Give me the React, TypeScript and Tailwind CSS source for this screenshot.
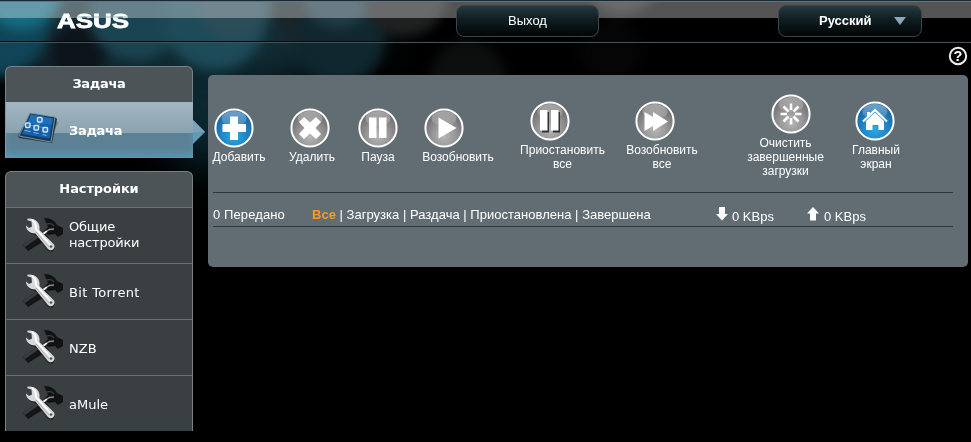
import React from 'react';

type IconKind = 'add' | 'remove' | 'pause' | 'play' | 'pauseAll' | 'playAll' | 'clear' | 'home';

interface Tool {
  icon: IconKind;
  lines: string[];
  column: string;
  offset: string;
}

const tools: Tool[] = [
  { icon: 'add', lines: ['Добавить'], column: 'w-[62px]', offset: 'ml-1.5' },
  { icon: 'remove', lines: ['Удалить'], column: 'w-[84px]', offset: 'ml-5' },
  { icon: 'pause', lines: ['Пауза'], column: 'w-12', offset: 'ml-1' },
  { icon: 'play', lines: ['Возобновить'], column: 'w-28', offset: 'ml-[22px]' },
  { icon: 'pauseAll', lines: ['Приостановить', 'все'], column: 'w-[97px]', offset: 'ml-4' },
  { icon: 'playAll', lines: ['Возобновить', 'все'], column: 'w-[102px]', offset: 'ml-6' },
  { icon: 'clear', lines: ['Очистить', 'завершенные', 'загрузки'], column: 'w-[127px] ml-[9px]', offset: 'ml-[49px]' },
  { icon: 'home', lines: ['Главный', 'экран'], column: 'w-[54px]', offset: 'ml-1.5' },
];

const settings = [
  { lines: ['Общие', 'настройки'], text: '-mt-0.5 tracking-[-0.2px]' },
  { lines: ['Bit Torrent'], text: 'mt-0.5 tracking-[0.35px]' },
  { lines: ['NZB'], text: 'mt-0.5' },
  { lines: ['aMule'], text: 'mt-0.5' },
];

const filters = ['Загрузка', 'Раздача', 'Приостановлена', 'Завершена'];

const Glyph: React.FC<{ icon: IconKind }> = ({ icon }) => {
  switch (icon) {
    case 'add':
      return <path d="M16 8.500h8v7.500h8v8h-8V32h-8v-8H8.500v-8H16z" />;
    case 'remove':
      return <path d="M14 9l6 5.500L26 9l5 5-5.500 6 5.500 6-5 5-6-5.500L14 31l-5-5 5.500-6L9 14z" />;
    case 'pause':
      return <path d="M11 9.500h7.500V30H11zM21 9.500h7.500V30H21z" />;
    case 'play':
      return <path d="M14.500 9.500v21L32.500 20z" />;
    case 'pauseAll':
      return (
        <>
          <path d="M12 11h7v20.500h-7zM23 11h7v20.500h-7z" fill="#333" />
          <path d="M10 9h7.500v20.500H10zM21 9h7.500v20.500H21z" />
        </>
      );
    case 'playAll':
      return <path d="M9.500 11v19l8.500-5v5l15-9.500L18 11v5z" />;
    case 'clear':
      return (
        <path
          d="M20 9.500v6.500M20 24v6.500M9.500 20H16M24 20h6.500M12.500 12.500l5 5M22.500 22.500l5 5M27.500 12.500l-5 5M17.500 22.500l-5 5"
          stroke="#fff"
          strokeWidth="2.500"
        />
      );
    default:
      return (
        <>
          <path d="M12 11h3v5h-3z" />
          <path d="m8 20.500 12-11.500 12 11.500" fill="none" stroke="#fff" strokeWidth="2" />
          <path d="m11 20 9-8.500 9 8.500v9h-5.500v-5h-6v5H11z" />
        </>
      );
  }
};

const RoundIcon: React.FC<{ icon: IconKind; className: string }> = ({ icon, className }) => {
  const blue = icon === 'add' || icon === 'home';
  return (
    <svg width="40" height="40" viewBox="0 0 40 40" className={className}>
      <defs>
        <radialGradient id={`disc-${icon}`} cx="50%" cy="72%" r="65%">
          <stop offset="0" stopColor={blue ? '#2cabe2' : '#b8b8b8'} />
          <stop offset=".45" stopColor={blue ? '#2389c8' : '#999'} />
          <stop offset="1" stopColor={blue ? '#1763a4' : '#6c6c6c'} />
        </radialGradient>
        <linearGradient id={`gloss-${icon}`} x2="0" y2="1">
          <stop offset="0" stopColor="#fff" stopOpacity=".4" />
          <stop offset="1" stopColor="#fff" stopOpacity=".12" />
        </linearGradient>
      </defs>
      <circle cx="20" cy="20" r="18.600" fill={`url(#disc-${icon})`} stroke="#fff" strokeWidth="2" />
      <ellipse cx="20" cy="10.500" rx="12.500" ry="7.500" fill={`url(#gloss-${icon})`} />
      <g fill="#fff">
        <Glyph icon={icon} />
      </g>
    </svg>
  );
};

const ToolsIcon = () => (
  <svg width="42" height="36" viewBox="0 0 42 36" className="shrink-0 -mt-px">
    {/* hammer */}
    <path d="M0 28 20 14l6 7L5 34z" fill="#131516" />
    <path d="m0 28 20-14 2 2L2 30z" fill="#3a3d3e" />
    <path d="M21 1c7 0 11 3 13 7l6 3v6l-5 3-3-3-7 1-4-4 4-4z" fill="#101213" />
    <path d="M22 8c3-2 7-2 9 1" fill="none" stroke="#3b3f41" strokeWidth="1.500" />
    <path d="M24 14c2-2 4-2 7-2" fill="none" stroke="#8a8e8f" strokeWidth="1.300" />
    <path d="m20 17 4-3" stroke="#eee" strokeWidth="1.600" />
    {/* adjustable wrench */}
    <path d="M4 11c1 5 5 7 9 7l12 16c4 3 8-1 6-5L17 13z" fill="#26292a" />
    <path d="M3 8.500C3 13 7 16.500 12.500 16.500L25 32c3 3 8 0 6-4.500L16.500 13C17.500 6 13 1 5 1.500L4 3l4.500 1.500.500 5L6 11z" fill="#d9d9d9" />
    <path d="m9 3 3 3 1 6 14.500 16" fill="none" stroke="#fff" strokeWidth="1.800" />
    <path d="m13 15 13 15" stroke="#a5a5a5" strokeWidth=".8" />
    <circle cx="28" cy="29.500" r="1.300" fill="#555" />
  </svg>
);

const TabletIcon = () => (
  <svg width="42" height="34" viewBox="0 0 42 34" className="relative shrink-0 -mt-0.5">
    <path d="m31 30 9-19-2-3z" fill="#405866" opacity=".5" />
    <path d="M12 1 37 5l2 2-5 24L1 26l-1-2z" fill="#253541" />
    <path d="m12 1 25 4-4 25L1 24z" fill="#173b57" stroke="#8ea8b6" strokeWidth=".8" />
    <path d="m13 2.500 22 4-3.500 20L4 22z" fill="#1460aa" />
    <path d="m13 2.500 22 4-1 6L9 12z" fill="#2077bf" opacity=".7" />
    <path d="M21 9v5M11 13l17 3" stroke="#5a9cd0" strokeWidth=".8" />
    <g fill="#2673b5" stroke="#cfe3f2" strokeWidth="1.500">
      <rect x="19.500" y="5.500" width="4.500" height="4.500" rx="1" />
      <rect x="7.500" y="11" width="4.500" height="4.500" rx="1" />
      <rect x="16" y="13.500" width="4.500" height="4.500" rx="1" />
      <rect x="25" y="15.500" width="4.500" height="4.500" rx="1" />
    </g>
    <path d="m6.500 18.500 6 1m3 1 5 1m4 1 4 1" stroke="#8fb9d8" />
  </svg>
);

const Backdrop = () => (
  <svg width="971" height="442" className="absolute inset-0 -z-10">
    <defs>
      <filter id="soft" x="-30%" y="-30%" width="160%" height="160%" colorInterpolationFilters="sRGB">
        <feGaussianBlur stdDeviation="6" />
      </filter>
      <filter id="haze" x="-50%" y="-50%" width="200%" height="200%" colorInterpolationFilters="sRGB">
        <feGaussianBlur stdDeviation="20" />
      </filter>
    </defs>
    <rect width="971" height="442" fill="#000" />
    <ellipse cx="170" cy="20" rx="215" ry="72" fill="#122d36" filter="url(#haze)" />
    <ellipse cx="205" cy="105" rx="42" ry="62" fill="#0b2831" filter="url(#haze)" />
    <g filter="url(#soft)">
      <circle cx="-4" cy="24" r="52" fill="#0f4557" />
      <circle cx="22" cy="-10" r="40" fill="#166b82" />
      <circle cx="78" cy="52" r="28" fill="#0d141b" />
      <circle cx="136" cy="12" r="48" fill="#1b4452" />
      <circle cx="215" cy="18" r="52" fill="#1e4b59" />
      <circle cx="235" cy="0" r="40" fill="#2f4f59" opacity=".7" />
      <circle cx="312" cy="8" r="40" fill="#19262a" />
      <circle cx="340" cy="40" r="44" fill="#10272f" />
      <circle cx="338" cy="-8" r="36" fill="#26444e" opacity=".8" />
      <circle cx="405" cy="-6" r="42" fill="#202222" />
      <circle cx="468" cy="78" r="38" fill="#0d0e0e" />
      <circle cx="622" cy="-24" r="38" fill="#242424" />
      <circle cx="610" cy="50" r="32" fill="#050505" />
    </g>
    <rect width="971" height="1" fill="#192936" />
    <rect y="1" width="971" height="1" fill="#66747b" />
    <rect y="2" width="971" height="16" fill="#fff" opacity=".33" />
    <rect y="41" width="971" height="1" fill="#05090b" />
    <rect y="42" width="971" height="1" fill="#40525c" />
  </svg>
);

const navButton =
  'h-8 shrink-0 rounded-lg border border-[#3b4649] bg-linear-to-b from-[#263a40] via-[#101e22] via-45% to-[#030607] text-white text-[13px] flex items-center';

const CardHeader: React.FC<{ title: string; className: string }> = ({ title, className }) => (
  <h2 className={`h-9 pb-0.5 flex items-center justify-center rounded-t-[6px] border border-b-0 border-[#7b8082] bg-[#4d5457] text-[13px] font-bold ${className}`}>
    {title}
  </h2>
);

export default function App() {
  return (
    <div className="relative isolate w-[971px] h-[442px] overflow-hidden text-white font-['Liberation_Sans',Arial,sans-serif]">
      <Backdrop />

      <header className="flex items-start h-[43px] pt-[5px]">
        <svg width="80" height="24" viewBox="0 0 80 24" className="ml-[54px] mt-[3px] shrink-0">
          <text x="3" y="19.500" fill="#fff" stroke="#fff" strokeWidth=".8" fontFamily="Liberation Sans, sans-serif" fontSize="21" fontWeight="700" textLength="72" lengthAdjust="spacingAndGlyphs">ASUS</text>
          <path d="M15 9h62" stroke="#71868e" strokeWidth=".6" />
        </svg>
        <button className={`${navButton} w-[143px] ml-[322px] justify-center`}>Выход</button>
        <button className={`${navButton} w-36 ml-[179px] pl-10 pb-px font-bold`}>
          Русский
          <svg width="12" height="8" className="ml-[22px] mt-px">
            <path d="M0 0h12L6 8z" fill="#8ba7b8" />
          </svg>
        </button>
      </header>

      <div className="flex items-start">
        <aside className="w-[188px] ml-[5px] mt-[23px] font-['DejaVu_Sans',Verdana,sans-serif] text-[13px]">
          <section>
            <CardHeader title="Задача" className="tracking-[-0.3px]" />
            <div className="relative h-14 flex items-center pl-3 border-l border-[#829caa] bg-linear-to-b from-[#a1b6c2] to-[#78949f]">
              <div className="absolute inset-x-0 bottom-0 h-[25px] bg-[#5c8195] shadow-[inset_0_-5px_8px_-2px_#5a9dba]" />
              <TabletIcon />
              <span className="relative ml-[9px] mt-0.5 font-bold tracking-[-0.3px]">Задача</span>
              <svg width="12" height="24" className="absolute left-full top-[18px]">
                <path d="M0 0 12 12 0 24z" fill="#5f9bb7" />
                <path d="M0 0 12 12H0z" fill="#7da2b3" />
              </svg>
            </div>
          </section>

          <section className="mt-[13px]">
            <CardHeader title="Настройки" className="tracking-[-0.1px]" />
            <ul className="border-x border-[#7b8082] bg-[#3a3f41]">
              {settings.map(({ lines, text }) => (
                <li key={lines[0]} className="h-14 flex items-center border-t border-[#6a7072] pl-[17px] leading-4">
                  <ToolsIcon />
                  <span className={`ml-1 ${text}`}>
                    {lines.map((line) => (
                      <span key={line} className="block">{line}</span>
                    ))}
                  </span>
                </li>
              ))}
            </ul>
          </section>
        </aside>

        <div className="flex-1 ml-[15px] mr-[3px]">
          <div className="h-8 flex justify-end pt-[3px]">
            <svg width="20" height="20" viewBox="0 0 20 20">
              <circle cx="10" cy="10" r="8.200" fill="#050505" stroke="#eee" strokeWidth="2" />
              <text x="10" y="15" textAnchor="middle" fill="#fff" fontFamily="Liberation Sans, sans-serif" fontSize="14.500" fontWeight="700">?</text>
            </svg>
          </div>

          <main className="h-48 rounded-[5px] bg-[#616d73] overflow-hidden">
            <div className="h-[117px] pt-[5px] flex items-center text-xs leading-[14px] text-center">
              {tools.map((tool) => (
                <div key={tool.icon} className={`${tool.column} shrink-0`}>
                  <RoundIcon icon={tool.icon} className={tool.offset} />
                  <div className="mt-0.5 whitespace-nowrap">
                    {tool.lines.map((line) => (
                      <div key={line}>{line}</div>
                    ))}
                  </div>
                </div>
              ))}
            </div>

            <div className="ml-[5px] w-[740px] h-[35px] border-y border-[#2c373d] flex items-center text-[13px] whitespace-nowrap pt-[12px] pb-px">
              <span className="w-[99px] tracking-[0.1px]">0 Передано</span>
              <span className="w-[403px] tracking-[0.02px]">
                <span className="font-bold text-[#ff9a1c]">Все</span>
                {filters.map((name) => (
                  <React.Fragment key={name}> | {name}</React.Fragment>
                ))}
              </span>
              <svg width="12" height="14" className="mb-[3px] ml-px">
                <path d="M3 0h6v7h3L6 13.500 0 7h3z" fill="#fff" />
              </svg>
              <span className="w-[77px] ml-1 mt-[3px]">0 KBps</span>
              <svg width="12" height="14" className="mb-[3px] -ml-0.5">
                <path d="M3 13.500h6v-7h3L6 0 0 6.500h3z" fill="#fff" />
              </svg>
              <span className="ml-[5px] mt-[3px]">0 KBps</span>
            </div>
          </main>
        </div>
      </div>
    </div>
  );
}
